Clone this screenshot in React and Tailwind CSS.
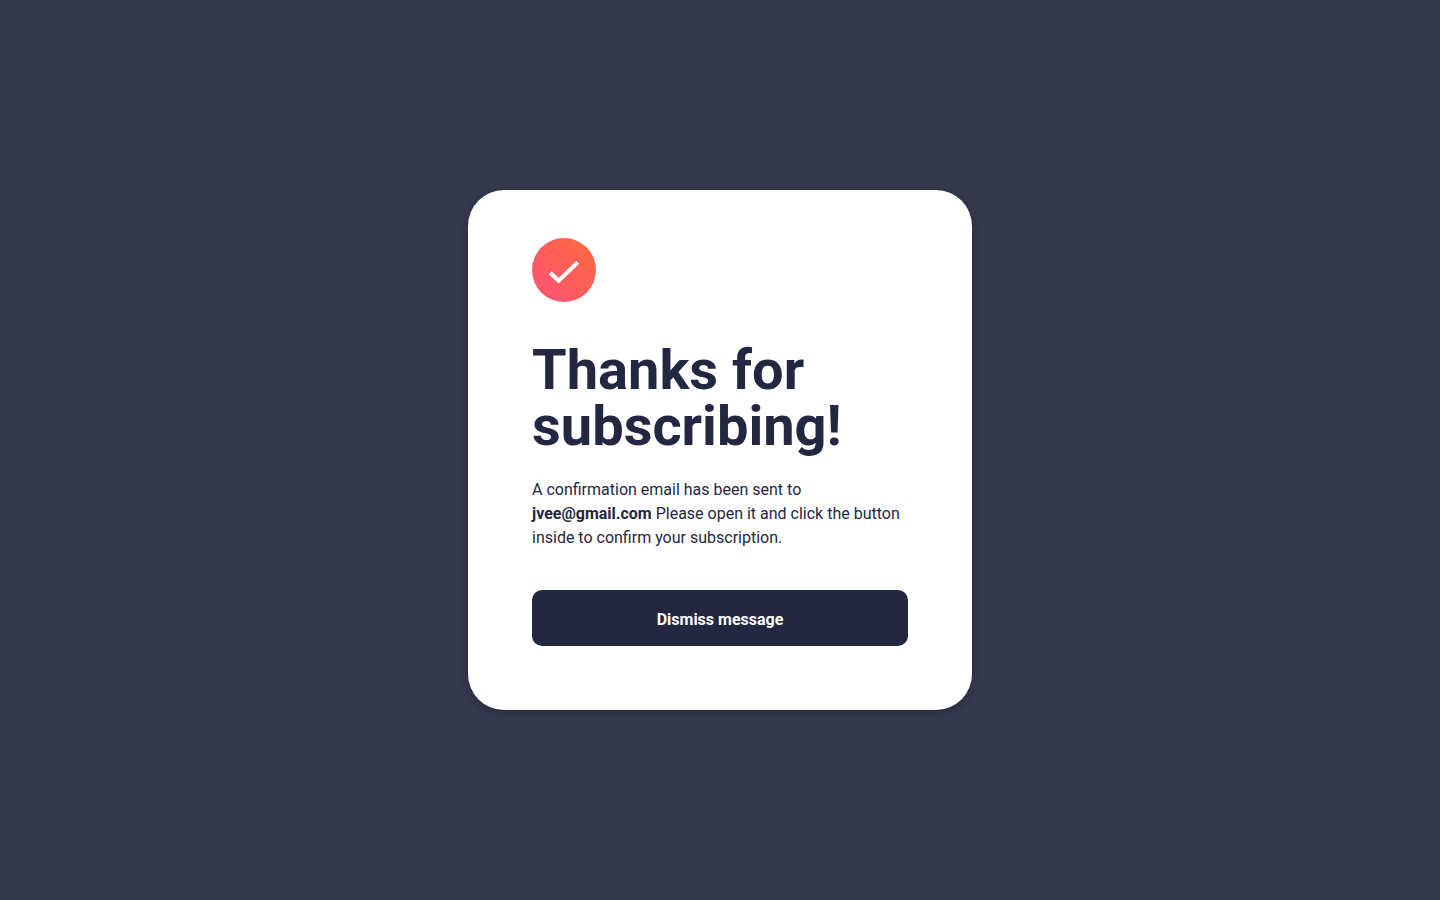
export default function App() {
  return (
    <main className="flex min-h-screen items-center justify-center bg-[#36384e] font-['Roboto',sans-serif] text-[#242742]">
      <section className="flex w-full max-w-[504px] flex-col rounded-[36px] bg-white px-16 pt-12 pb-16 shadow-[0_3px_8px_rgba(0,0,0,0.24)]">
        <svg className="size-16" viewBox="0 0 64 64" fill="none" aria-hidden="true">
          <defs>
            <linearGradient id="badge" x1="100%" x2="0%" y1="0%" y2="100%">
              <stop offset="0%" stopColor="#FF6A3A" />
              <stop offset="100%" stopColor="#FF527B" />
            </linearGradient>
          </defs>
          <circle cx="32" cy="32" r="32" fill="url(#badge)" />
          <path stroke="#fff" strokeWidth="4" d="m18.286 34.686 8.334 7.98 19.094-18.285" />
        </svg>
        <h1 className="mt-10 text-[56px] leading-[56px] font-bold">Thanks for subscribing!</h1>
        <p className="mt-6 text-base leading-6">
          A confirmation email has been sent to <strong className="font-bold">jvee@gmail.com</strong> Please open it and click the button inside to confirm your subscription.
        </p>
        <button type="button" className="mt-10 h-14 w-full rounded-[10px] bg-[#242742] pt-1 text-base font-bold text-white">
          Dismiss message
        </button>
      </section>
    </main>
  );
}
